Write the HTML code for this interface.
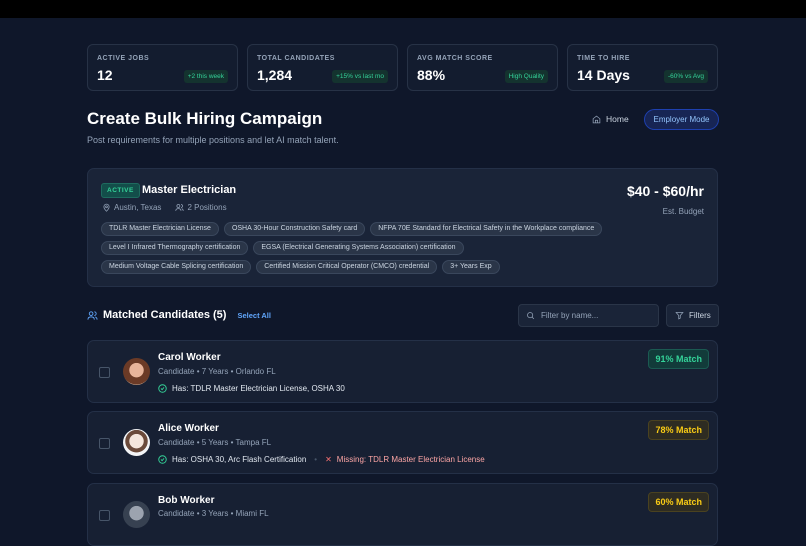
<!DOCTYPE html>
<html><head><style>
*{box-sizing:border-box;margin:0;padding:0}
body{width:806px;height:524px;overflow:hidden;background:#0f172a;font-family:"Liberation Sans",sans-serif;color:#f1f5f9;position:relative}
.top{position:absolute;left:0;top:0;width:806px;height:18px;background:#000}
.abs{position:absolute}
.stat{position:absolute;top:44px;width:151px;height:47px;border:1px solid #273246;border-radius:6px;background:#131c2f}
.stat .l{position:absolute;left:9px;top:10px;font-size:7px;font-weight:bold;letter-spacing:.5px;color:#94a3b8}
.stat .v{position:absolute;left:9px;top:22px;font-size:14px;font-weight:bold;color:#fff}
.stat .b{position:absolute;right:9px;top:25px;font-size:6.5px;color:#34d399;background:#14332f;padding:3px 4px;border-radius:3px}
.card{position:absolute;left:87px;width:631px;background:#172033;border:1px solid #243047;border-radius:7px}
.tags{position:absolute;left:13px;top:53px;width:520px;display:flex;flex-wrap:wrap;gap:5px 5px}
.tag{display:block;font-size:7px;line-height:8px;color:#cbd5e1;background:#2a3548;border:1px solid #3a475c;border-radius:8px;padding:2px 7px}
.muted{color:#94a3b8}
.cb{position:absolute;left:11px;width:11px;height:11px;border:1.5px solid #475569;border-radius:2px}
.av{position:absolute;left:35px;width:27px;height:27px;border-radius:50%}
.nm{position:absolute;left:70px;font-size:10px;font-weight:bold;color:#fff}
.sub{position:absolute;left:70px;font-size:8px;color:#94a3b8}
.has{position:absolute;left:70px;font-size:8px;color:#e2e8f0;display:flex;align-items:center;gap:5px}
.match{position:absolute;right:8px;top:8px;font-size:9px;font-weight:bold;padding:4px 6px;border-radius:4px}
</style></head><body>
<div class="top"></div>
<div class="stat" style="left:87px"><div class="l">ACTIVE JOBS</div><div class="v">12</div><div class="b">+2 this week</div></div>
<div class="stat" style="left:247px"><div class="l">TOTAL CANDIDATES</div><div class="v">1,284</div><div class="b">+15% vs last mo</div></div>
<div class="stat" style="left:407px"><div class="l">AVG MATCH SCORE</div><div class="v">88%</div><div class="b">High Quality</div></div>
<div class="stat" style="left:567px"><div class="l">TIME TO HIRE</div><div class="v">14 Days</div><div class="b">-60% vs Avg</div></div>

<div class="abs" style="left:87px;top:109px;font-size:17px;font-weight:bold;color:#fff">Create Bulk Hiring Campaign</div>
<div class="abs muted" style="left:87px;top:135px;font-size:9px">Post requirements for multiple positions and let AI match talent.</div>
<div class="abs" style="left:592px;top:114px;font-size:8.5px;color:#cbd5e1;display:flex;align-items:center;gap:5px">
<svg width="9" height="9" viewBox="0 0 24 24" fill="none" stroke="#94a3b8" stroke-width="2"><path d="M3 10l9-7 9 7v11H3z"/><path d="M9 21v-7h6v7"/></svg>Home</div>
<div class="abs" style="left:644px;top:109px;width:75px;height:21px;border:1px solid #1e40af;background:#172554;border-radius:11px;font-size:8px;color:#93c5fd;text-align:center;line-height:19px">Employer Mode</div>

<div class="card" style="top:168px;height:119px;background:#1a2438">
<div class="abs" style="left:13px;top:14px;font-size:6.5px;font-weight:bold;color:#34d399;background:#134e4a;border:1px solid #1e6b5f;padding:3px 5px;border-radius:3px;letter-spacing:.5px">ACTIVE</div>
<div class="abs" style="left:54px;top:15px;font-size:11px;font-weight:bold;color:#fff">Master Electrician</div>
<div class="abs muted" style="left:14px;top:34px;font-size:8px;display:flex;align-items:center;gap:3px">
<svg width="9" height="9" viewBox="0 0 24 24" fill="none" stroke="#94a3b8" stroke-width="2"><path d="M12 22s7-7 7-12a7 7 0 10-14 0c0 5 7 12 7 12z"/><circle cx="12" cy="10" r="2.5"/></svg>Austin, Texas
<span style="width:8px"></span><svg width="9" height="9" viewBox="0 0 24 24" fill="none" stroke="#94a3b8" stroke-width="2"><circle cx="9" cy="8" r="4"/><path d="M2 21c0-4 3-6 7-6s7 2 7 6M16 4a4 4 0 010 8M22 21c0-3-2-5-4-6"/></svg>2 Positions</div>
<div class="abs" style="right:13px;top:14px;font-size:14px;font-weight:bold;color:#fff">$40 - $60/hr</div>
<div class="abs muted" style="right:13px;top:38px;font-size:8px">Est. Budget</div>
<div class="tags">
<span class="tag">TDLR Master Electrician License</span><span class="tag">OSHA 30-Hour Construction Safety card</span><span class="tag">NFPA 70E Standard for Electrical Safety in the Workplace compliance</span>
<span class="tag">Level I Infrared Thermography certification</span><span class="tag">EGSA (Electrical Generating Systems Association) certification</span><span style="width:100px"></span>
<span class="tag">Medium Voltage Cable Splicing certification</span><span class="tag">Certified Mission Critical Operator (CMCO) credential</span><span class="tag">3+ Years Exp</span>
</div></div>

<div class="abs" style="left:87px;top:309px;display:flex;align-items:center;gap:5px">
<svg width="11" height="11" viewBox="0 0 24 24" fill="none" stroke="#60a5fa" stroke-width="2"><circle cx="9" cy="8" r="4"/><path d="M2 21c0-4 3-6 7-6s7 2 7 6M16 4a4 4 0 010 8M22 21c0-3-2-5-4-6"/></svg>
<span style="font-size:11px;font-weight:bold;color:#fff">Matched Candidates (5)</span>
<span style="font-size:7.5px;font-weight:bold;color:#60a5fa;margin-left:6px">Select All</span></div>
<div class="abs" style="left:518px;top:304px;width:141px;height:23px;background:#1a2438;border:1px solid #2a3548;border-radius:4px;font-size:8px;color:#94a3b8;line-height:21px;padding-left:22px">Filter by name...
<svg class="abs" style="left:7px;top:6px" width="9" height="9" viewBox="0 0 24 24" fill="none" stroke="#94a3b8" stroke-width="2"><circle cx="11" cy="11" r="7"/><path d="M21 21l-5-5"/></svg></div>
<div class="abs" style="left:666px;top:304px;width:53px;height:23px;background:#1a2438;border:1px solid #2a3548;border-radius:4px;font-size:8px;color:#cbd5e1;line-height:21px;padding-left:22px">Filters
<svg class="abs" style="left:8px;top:6px" width="9" height="9" viewBox="0 0 24 24" fill="none" stroke="#94a3b8" stroke-width="2"><path d="M3 4h18l-7 8v7l-4 2v-9z"/></svg></div>

<div class="card" style="top:340px;height:63px">
<div class="cb" style="top:26px"></div>
<div class="av" style="top:17px;background:radial-gradient(circle at 50% 45%,#e8b49a 0 35%,#6b3a26 37% 70%,#c9a48a 72%)"></div>
<div class="nm" style="top:11px">Carol Worker</div>
<div class="sub" style="top:26px">Candidate • 7 Years • Orlando FL</div>
<div class="has" style="top:43px"><svg width="9" height="9" viewBox="0 0 24 24" fill="none" stroke="#34d399" stroke-width="2.5"><circle cx="12" cy="12" r="10"/><path d="M8 12l3 3 5-6"/></svg>Has: TDLR Master Electrician License, OSHA 30</div>
<div class="match" style="color:#34d399;background:#123b3a;border:1px solid #1b5a52">91% Match</div>
</div>

<div class="card" style="top:411px;height:63px">
<div class="cb" style="top:26px"></div>
<div class="av" style="top:17px;background:radial-gradient(circle at 50% 45%,#f5e6dc 0 35%,#6b4a3a 37% 55%,#f3f4f6 57%)"></div>
<div class="nm" style="top:11px">Alice Worker</div>
<div class="sub" style="top:26px">Candidate • 5 Years • Tampa FL</div>
<div class="has" style="top:43px"><svg width="9" height="9" viewBox="0 0 24 24" fill="none" stroke="#34d399" stroke-width="2.5"><circle cx="12" cy="12" r="10"/><path d="M8 12l3 3 5-6"/></svg>Has: OSHA 30, Arc Flash Certification <span style="color:#475569;margin:0 3px">•</span><span style="color:#f87171">✕</span><span style="color:#fca5a5">Missing: TDLR Master Electrician License</span></div>
<div class="match" style="color:#facc15;background:#2e2c22;border:1px solid #4a4220">78% Match</div>
</div>

<div class="card" style="top:483px;height:63px">
<div class="cb" style="top:26px"></div>
<div class="av" style="top:17px;background:radial-gradient(circle at 50% 45%,#9ca3af 0 35%,#374151 37%)"></div>
<div class="nm" style="top:11px">Bob Worker</div>
<div class="sub" style="top:25px">Candidate • 3 Years • Miami FL</div>
<div class="match" style="color:#facc15;background:#2e2c22;border:1px solid #4a4220">60% Match</div>
</div>
</body></html>
